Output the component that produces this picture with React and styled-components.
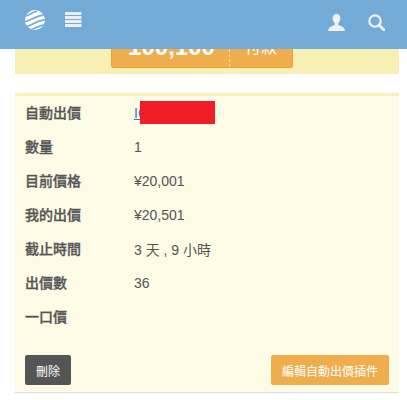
import React from "react";
import styled, { createGlobalStyle } from "styled-components";

const Global = createGlobalStyle`
  html, body { margin: 0; padding: 0; background: #fff; overflow: hidden; }
  body { font-family: "Liberation Sans", "Noto Sans CJK TC", sans-serif; color: #555; font-size: 14px; }
  * { box-sizing: border-box; }
`;

const Header = styled.header`
  position: fixed; top: 0; left: 0; right: 0; height: 49px; z-index: 5;
  background: #74aad6;
  display: flex; align-items: flex-start; justify-content: space-between;
  padding: 10px 22px 0 25px;
`;
const IconGroup = styled.div`
  display: flex; align-items: flex-start; gap: ${p => p.$gap}px; padding-top: ${p => p.$top || 0}px;
`;
const Page = styled.main`
  padding: 0 8px 0 15px;
  display: flex; flex-direction: column; gap: 19px;
`;
const Band = styled.section`
  height: 74px; background: #f7efb3;
  display: flex; align-items: flex-end; justify-content: center;
  padding: 0 10px 6px 0;
`;
const PayButton = styled.div`
  width: 182px; height: 40px; background: #f0ad4e; border: 1px solid #eea236; border-radius: 2px;
  color: #fff; display: flex; align-items: stretch;
`;
const Amount = styled.span`
  flex: 0 0 118px; text-align: center; font-size: 24px; font-weight: 700; line-height: 36px;
  border-right: 1px dashed #f8d9a5; padding-left: 2px;
`;
const PayLabel = styled.span`
  flex: 1; text-align: center; font-size: 16px; line-height: 38px;
`;
const Panel = styled.section`
  background: #fdfae6; border-top: 3px solid #f7efb3; border-bottom: 1px solid #ddd;
  height: 300px; padding: 0 10px 7px 10px; display: flex; flex-direction: column;
`;
const Rows = styled.div`
  flex: 1;
`;
const Row = styled.div`
  display: grid; grid-template-columns: 109px 1fr; height: 34px; align-items: center;
`;
const Label = styled.span`
  font-weight: 500; font-size: 14px; color: #555; margin-bottom: 2px;
  -webkit-text-stroke: 0.3px #555;
`;
const Value = styled.span`
  font-size: 14px; color: #555; position: relative;
`;
const LinkText = styled.a`
  color: #337ab7; text-decoration: underline;
`;
const Redaction = styled.span`
  position: absolute; left: 6px; top: -4px; width: 75px; height: 23px; background: #f21c26;
`;
const Actions = styled.div`
  display: flex; justify-content: space-between; align-items: center;
`;
const Button = styled.button`
  height: 30px; padding: 0 11px; border-radius: 2px; border: none; font: inherit; font-size: 12px; color: #fff;
  background: ${p => (p.$primary ? "#f0ad4e" : "#555")};
`;

const Logo = () => (
  <svg width="20" height="20" viewBox="0 0 20 20">
    <defs>
      <clipPath id="c"><circle cx="10" cy="10" r="10" /></clipPath>
    </defs>
    <g clipPath="url(#c)">
      <rect width="20" height="20" fill="#fff" />
      <g fill="none" stroke="#74aad6" strokeWidth="1.7">
        <path d="M1 6C4 5.5 6 2.5 12 1" />
        <path d="M0 11.5C5 11 8 6.5 21 4.5" />
        <path d="M1 16.5C7 15.5 10 11 21 9.5" />
        <path d="M6 20C10 18.5 14 15 21 14.5" />
      </g>
    </g>
  </svg>
);
const Menu = () => (
  <svg width="17" height="16" viewBox="0 0 17 16" style={{ marginTop: 2 }}>
    <g fill="#eee">
      <rect y="0" width="16.5" height="3" />
      <rect y="4" width="16.5" height="3" />
      <rect y="8" width="16.5" height="3" />
      <rect y="12" width="16.5" height="3" />
    </g>
  </svg>
);
const User = () => (
  <svg width="17" height="17" viewBox="0 0 17 17">
    <path fill="#f1f1f1" d="M8.5 0C6 0 4.6 2 4.7 4.6c.1 2 1 3.6 2 4.6.3.8 0 1.6-.7 2C4 12.2 1 13 .4 15.2L0 17h17l-.4-1.8c-.6-2.2-3.6-3-5.6-4-.7-.4-1-1.2-.7-2 1-1 1.9-2.6 2-4.6C12.4 2 11 0 8.5 0z" />
  </svg>
);
const Search = () => (
  <svg width="17" height="17" viewBox="0 0 17 17">
    <circle cx="7" cy="7" r="5.7" fill="none" stroke="#f1f1f1" strokeWidth="2.2" />
    <path d="M11 11l5 5" stroke="#f1f1f1" strokeWidth="2.8" strokeLinecap="round" />
  </svg>
);

const data = [
  ["數量", "1"],
  ["目前價格", "¥20,001"],
  ["我的出價", "¥20,501"],
  ["截止時間", "3 天 , 9 小時"],
  ["出價數", "36"],
  ["一口價", ""],
];

export default function App() {
  return (
    <>
      <Global />
      <Header>
        <IconGroup $gap={20}>
          <Logo />
          <Menu />
        </IconGroup>
        <IconGroup $gap={23} $top={4}>
          <User />
          <Search />
        </IconGroup>
      </Header>
      <Page>
        <Band>
          <PayButton>
            <Amount>100,100</Amount>
            <PayLabel>付款</PayLabel>
          </PayButton>
        </Band>
        <Panel>
          <Rows>
            <Row>
              <Label>自動出價</Label>
              <Value>
                <LinkText>I6</LinkText>
                <Redaction />
              </Value>
            </Row>
            {data.map(([k, v]) => (
              <Row key={k}>
                <Label>{k}</Label>
                <Value>{v}</Value>
              </Row>
            ))}
          </Rows>
          <Actions>
            <Button>刪除</Button>
            <Button $primary>編輯自動出價插件</Button>
          </Actions>
        </Panel>
      </Page>
    </>
  );
}
